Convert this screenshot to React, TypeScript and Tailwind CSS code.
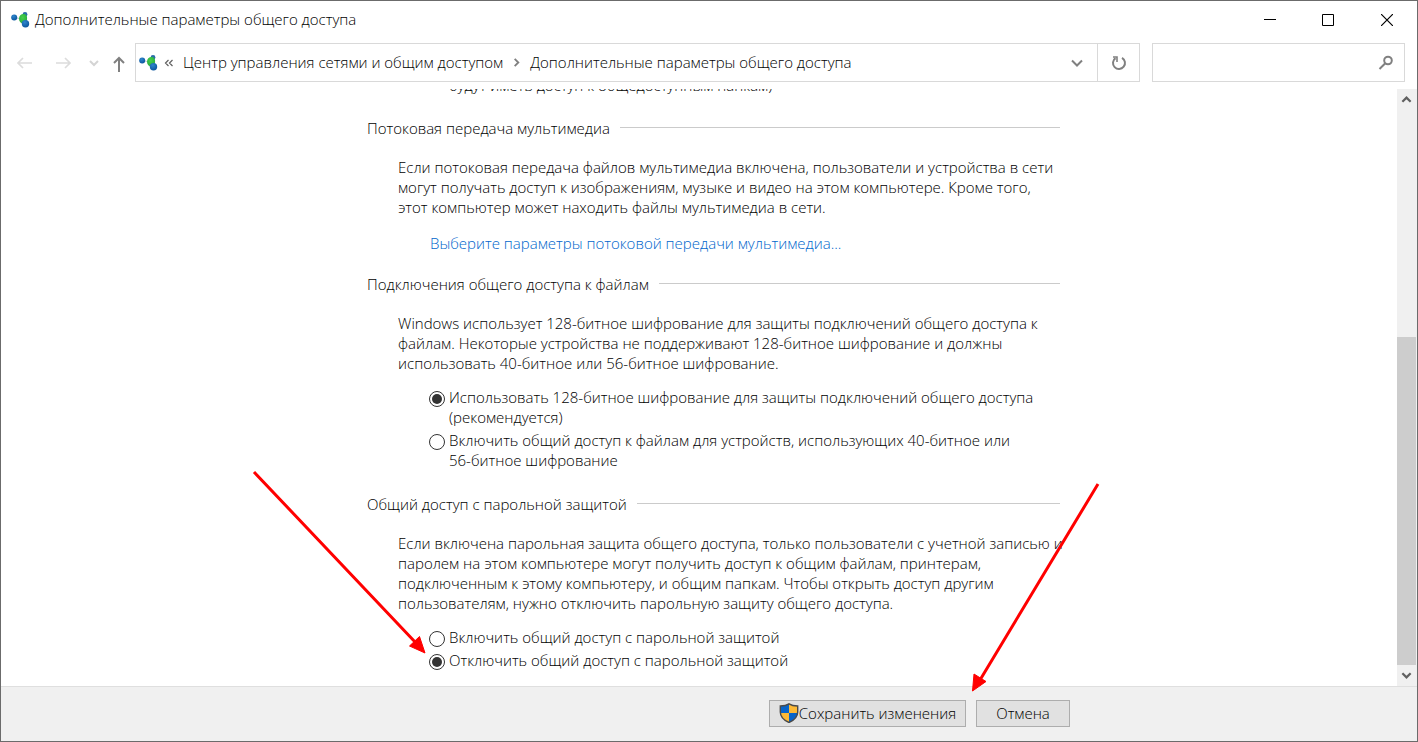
import { useState, type ReactNode } from "react";

function NetworkIcon() {
  return (
    <svg width="20" height="18" viewBox="0 0 20 18" aria-hidden="true" className="shrink-0">
      <defs>
        <radialGradient id="blueBall" cx="0.4" cy="0.3" r="0.7">
          <stop offset="0" stopColor="#2f86cc" />
          <stop offset="1" stopColor="#0b559f" />
        </radialGradient>
        <radialGradient id="greenBall" cx="0.45" cy="0.35" r="0.7">
          <stop offset="0" stopColor="#48d04c" />
          <stop offset="1" stopColor="#22a83a" />
        </radialGradient>
      </defs>
      <path d="M4 6.500L12 8" stroke="#b9c7d2" strokeWidth="1.200" fill="none" />
      <circle cx="15" cy="3.500" r="2.400" fill="#2a6ea8" />
      <circle cx="4.200" cy="6.500" r="3" fill="url(#blueBall)" />
      <path d="M13.500 3C16.500 3 17.500 5.500 17 8.500C16.700 11 15.500 13 13.500 13C11 12.500 9 10.500 9 7.800C9 5 11 3 13.500 3Z" fill="url(#greenBall)" />
      <circle cx="15.500" cy="12.800" r="3.700" fill="url(#blueBall)" />
    </svg>
  );
}

function ShieldIcon() {
  return (
    <svg width="20" height="20" viewBox="0 0 20 20" aria-hidden="true" className="shrink-0">
      <defs>
        <clipPath id="shieldShape">
          <path d="M10 .8 C7.500 2.500 4.500 3 1.300 3 V9 C1.300 14 5.500 17.500 10 19.500 C14.500 17.500 18.700 14 18.700 9 V3 C15.500 3 12.500 2.500 10 .8Z" />
        </clipPath>
      </defs>
      <g clipPath="url(#shieldShape)">
        <path d="M0 0H10V10H0Z M10 10H20V20H10Z" fill="#0764c9" />
        <path d="M10 0H20V10H10Z M0 10H10V20H0Z" fill="#fdb934" />
      </g>
      <path d="M10 .8 C7.500 2.500 4.500 3 1.300 3 V9 C1.300 14 5.500 17.500 10 19.500 C14.500 17.500 18.700 14 18.700 9 V3 C15.500 3 12.500 2.500 10 .8Z" fill="none" stroke="#4a4a4a" strokeWidth="1.400" />
    </svg>
  );
}

function Chevron({ d, className, size = 12, width = 2 }: { d: string; className: string; size?: number; width?: number }) {
  return (
    <svg width={size} height={size} viewBox="0 0 12 12" fill="none" stroke="currentColor" strokeWidth={width} aria-hidden="true" className={className}>
      <path d={d} />
    </svg>
  );
}

function TitleBar() {
  return (
    <header className="flex h-[37px] shrink-0 items-center pl-[9px]">
      <NetworkIcon />
      <h1 className="ml-[5px] pb-[2px] leading-5 font-light">Дополнительные параметры общего доступа</h1>
      <div className="ml-auto flex h-full">
        <button type="button" aria-label="Свернуть" className="flex w-[58px] items-center justify-center">
          <svg width="12" height="12" stroke="#000"><path d="M0 5.500H12" /></svg>
        </button>
        <button type="button" aria-label="Развернуть" className="flex w-[58px] items-center justify-center">
          <svg width="12" height="12" fill="none" stroke="#000"><path d="M.5 .5H11.500V11.500H.5Z" /></svg>
        </button>
        <button type="button" aria-label="Закрыть" className="flex w-[60px] items-center justify-center">
          <svg width="12" height="12" stroke="#000" strokeWidth="1.200"><path d="M0 0L12 12M12 0L0 12" /></svg>
        </button>
      </div>
    </header>
  );
}

function Toolbar() {
  return (
    <nav className="mt-[5px] flex h-[39px] shrink-0 pr-3 text-[#808080]">
      <div className="flex w-[134px] shrink-0 items-center pl-[15px]">
        <button type="button" aria-label="Назад" className="text-[#dcdcdc]">
          <svg width="17" height="14" fill="none" stroke="currentColor" strokeWidth="1.700"><path d="M16 7H2M7 2L2 7L7 12" /></svg>
        </button>
        <button type="button" aria-label="Вперед" className="ml-[22px] text-[#dcdcdc]">
          <svg width="17" height="14" fill="none" stroke="currentColor" strokeWidth="1.700"><path d="M1 7H15M10 2L15 7L10 12" /></svg>
        </button>
        <button type="button" aria-label="Последние расположения" className="ml-[16px] text-[#d4d4d4]">
          <Chevron d="M2 4L6 8L10 4" className="block" />
        </button>
        <button type="button" aria-label="Вверх" className="ml-[12px] mt-[2px]">
          <svg width="14" height="16" fill="none" stroke="currentColor" strokeWidth="2"><path d="M7 16V2M2 7L7 2L12 7" /></svg>
        </button>
      </div>
      <div className="flex min-w-0 flex-1 items-center border border-[#d9d9d9] pl-[2px] text-black">
        <NetworkIcon />
        <span className="ml-[6px] flex text-[#606060]">
          <svg width="10" height="10" fill="none" stroke="currentColor" strokeWidth="1.200" aria-hidden="true"><path d="M4.500 2L1.500 5L4.500 8M8.500 2L5.500 5L8.500 8" /></svg>
        </span>
        <a href="#network" className="ml-[9px] whitespace-nowrap pb-[2px] leading-5">Центр управления сетями и общим доступом</a>
        <Chevron d="M4 2L8 6L4 10" className="mx-[8px] shrink-0 text-[#808080]" size={11} />
        <a href="#sharing" className="whitespace-nowrap pb-[2px] leading-5">Дополнительные параметры общего доступа</a>
        <button type="button" aria-label="Предыдущие расположения" className="ml-auto mr-[14px] text-[#808080]">
          <Chevron d="M1 3.500L6 8.500L11 3.500" className="block" />
        </button>
        <button type="button" aria-label="Обновить" className="flex h-full w-[42px] items-center justify-center border-l border-[#d9d9d9] text-[#808080]">
          <svg width="16" height="16" fill="none" stroke="currentColor" strokeWidth="2"><path d="M11 2.800A6 6 0 1 1 4.500 3.100" /><path d="M2 2H6V7" strokeWidth="1.600" /></svg>
        </button>
      </div>
      <label className="ml-3 flex w-[253px] shrink-0 items-center border border-[#d9d9d9] pr-[10px]">
        <input type="text" aria-label="Поиск" className="min-w-0 flex-1 px-2 outline-none" />
        <svg width="16" height="16" fill="none" stroke="currentColor" strokeWidth="2" aria-hidden="true"><circle cx="10" cy="5.500" r="3.800" /><path d="M7.300 8.300L1.500 14" /></svg>
      </label>
    </nav>
  );
}

function SectionHeading({ children }: { children: ReactNode }) {
  return (
    <div className="flex items-center gap-[10px]">
      <h2 className="leading-5 font-light">{children}</h2>
      <div className="mb-px h-px flex-1 bg-[#cbcbcb]" />
    </div>
  );
}

function Lines({ lines }: { lines: string[] }) {
  return (
    <>
      {lines.map((line) => (
        <span key={line} className="block whitespace-nowrap">{line}</span>
      ))}
    </>
  );
}

function Description({ lines }: { lines: string[] }) {
  return (
    <p className="mt-[19px] pl-[31px]">
      <Lines lines={lines} />
    </p>
  );
}

interface OptionsProps {
  name: string;
  options: string[][];
  initial: number;
}

function Options({ name, options, initial }: OptionsProps) {
  const [selected, setSelected] = useState(initial);
  return (
    <div role="radiogroup" className="mt-[14px] flex flex-col gap-[3px] pl-[62px]">
      {options.map((lines, index) => (
        <label key={lines[0]} className="flex items-start gap-1">
          <input
            type="radio"
            name={name}
            checked={selected === index}
            onChange={() => setSelected(index)}
            className="mt-1 size-4 shrink-0 appearance-none rounded-full border border-[#333] bg-clip-content p-[2px] checked:bg-[#333]"
          />
          <span><Lines lines={lines} /></span>
        </label>
      ))}
    </div>
  );
}

function ScrollBar() {
  return (
    <div className="flex w-5 shrink-0 flex-col bg-[#f0f0f0] pr-px text-[#606060]">
      <button type="button" aria-label="Прокрутить вверх" className="flex h-[20px] items-center justify-center">
        <Chevron d="M1.500 8.500L6 4L10.500 8.500" className="block" size={11} width={2.400} />
      </button>
      <div className="flex flex-1 flex-col justify-end">
        <div className="h-[59%] bg-[#cdcdcd]" />
      </div>
      <button type="button" aria-label="Прокрутить вниз" className="flex h-[21px] items-center justify-center">
        <Chevron d="M1.500 3.500L6 8L10.500 3.500" className="block" size={11} width={2.400} />
      </button>
    </div>
  );
}

function Arrows() {
  return (
    <svg width="1418" height="742" viewBox="1 1 1418 742" aria-hidden="true" className="pointer-events-none absolute left-0 top-0" fill="#f00" stroke="#f00">
      <path d="M254 472L416 643M1098 484L980 680" strokeWidth="3" />
      <path d="M425 653L409.500 646L419.500 636.500Z M972.500 691L974 674L986 681.500Z" strokeWidth="1" />
    </svg>
  );
}

export default function App() {
  return (
    <div className="relative flex h-screen flex-col overflow-hidden border border-[#6b6b6b] bg-white font-['Open_Sans','Noto_Sans',sans-serif] text-[15px] leading-5 font-light text-black">
      <TitleBar />
      <Toolbar />
      <div className="mt-[7px] flex min-h-0 flex-1">
        <main className="min-w-0 flex-1 overflow-hidden pl-[366px]">
          <div className="-mt-[14px] w-[693px]">
            <p className="pl-[82px]">будут иметь доступ к общедоступным папкам)</p>
            <section className="mt-[23px]">
              <SectionHeading>Потоковая передача мультимедиа</SectionHeading>
              <Description
                lines={[
                  "Если потоковая передача файлов мультимедиа включена, пользователи и устройства в сети",
                  "могут получать доступ к изображениям, музыке и видео на этом компьютере. Кроме того,",
                  "этот компьютер может находить файлы мультимедиа в сети.",
                ]}
              />
              <p className="mt-4 pl-[63px]">
                <a href="#streaming" className="text-[#0066cc]">Выберите параметры потоковой передачи мультимедиа...</a>
              </p>
            </section>
            <section className="mt-[21px]">
              <SectionHeading>Подключения общего доступа к файлам</SectionHeading>
              <Description
                lines={[
                  "Windows использует 128-битное шифрование для защиты подключений общего доступа к",
                  "файлам. Некоторые устройства не поддерживают 128-битное шифрование и должны",
                  "использовать 40-битное или 56-битное шифрование.",
                ]}
              />
              <Options
                name="encryption"
                initial={0}
                options={[
                  ["Использовать 128-битное шифрование для защиты подключений общего доступа", "(рекомендуется)"],
                  ["Включить общий доступ к файлам для устройств, использующих 40-битное или", "56-битное шифрование"],
                ]}
              />
            </section>
            <section className="mt-6">
              <SectionHeading>Общий доступ с парольной защитой</SectionHeading>
              <Description
                lines={[
                  "Если включена парольная защита общего доступа, только пользователи с учетной записью и",
                  "паролем на этом компьютере могут получить доступ к общим файлам, принтерам,",
                  "подключенным к этому компьютеру, и общим папкам. Чтобы открыть доступ другим",
                  "пользователям, нужно отключить парольную защиту общего доступа.",
                ]}
              />
              <Options
                name="password"
                initial={1}
                options={[["Включить общий доступ с парольной защитой"], ["Отключить общий доступ с парольной защитой"]]}
              />
            </section>
          </div>
        </main>
        <ScrollBar />
      </div>
      <footer className="flex h-[55px] shrink-0 items-start border-t border-[#dfdfdf] bg-[#f0f0f0] pl-[768px] pt-[13px]">
        <div className="flex gap-[10px]">
          <button type="button" className="flex h-[27px] w-[197px] items-center justify-center whitespace-nowrap border border-[#adadad] bg-[#e1e1e1] pb-[2px]">
            <ShieldIcon />
            Сохранить изменения
          </button>
          <button type="button" className="h-[27px] w-[94px] border border-[#adadad] bg-[#e1e1e1] pb-[2px]">Отмена</button>
        </div>
      </footer>
      <Arrows />
    </div>
  );
}
